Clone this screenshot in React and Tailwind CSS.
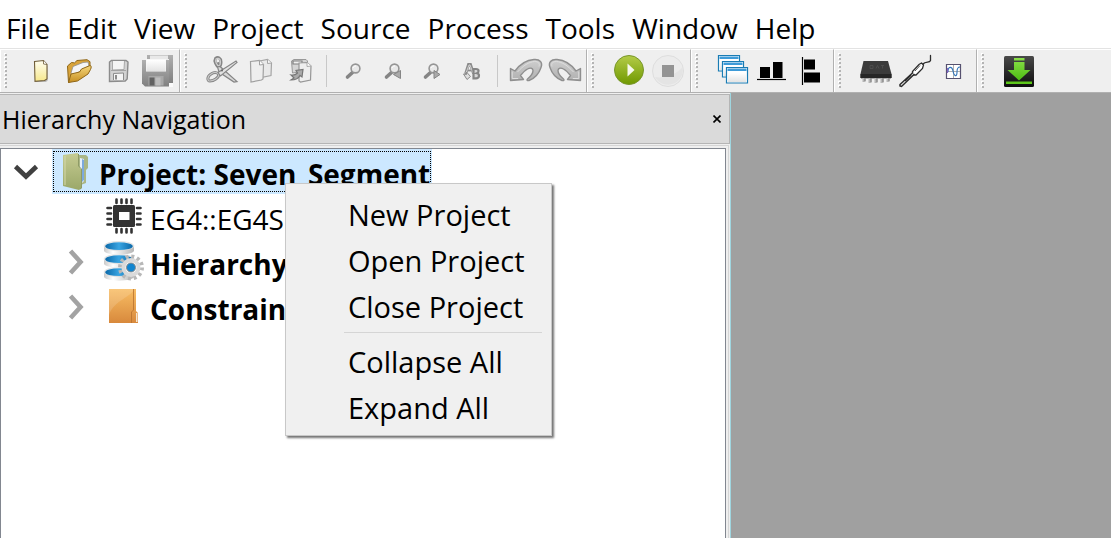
import React from "react";

const menus = ["File", "Edit", "View", "Project", "Source", "Process", "Tools", "Window", "Help"];

function Icon({ children }) {
  return (
    <svg viewBox="0 0 39 42" className="h-[42px] w-[39px]" aria-hidden="true" fill="none">
      {children}
    </svg>
  );
}

function NewIcon() {
  return (
    <Icon>
      <path d="M15 12.5l1-1h7.500l3 3.500v15l-2 1H15z" transform="translate(1 1)" fill="#b8b8b8" />
      <path d="M14.500 11.500l9-1 3.500 4v14.500l-2.500 1.500-9.500.8z" fill="url(#paper)" stroke="#705d38" strokeWidth="1.100" />
      <path d="M23.500 10.500v3.500l3.500.5" fill="#fff" stroke="#705d38" strokeWidth=".8" />
    </Icon>
  );
}

function OpenIcon() {
  return (
    <Icon>
      <path d="M8.500 16l4-3.500 3 .4 2.500-2.400 10-.8 3 2v6L9.500 32.500z" fill="#d9a43b" stroke="#8f6617" />
      <path d="M12 23l2-6.500 10-4 5-.5 1 4-17 10z" fill="#f5f5f5" stroke="#8f8f8f" strokeWidth=".8" />
      <path d="M9.500 32.500l2.500-8.500 8.500-2 2-3 8.500-3.500c1.500 0 1.500 2 .5 4l-2.500 4.500-10.500 7z" fill="url(#gold)" stroke="#8f6617" />
    </Icon>
  );
}

function SaveIcon() {
  return (
    <Icon>
      <path d="M11.500 12l2-1.500h14.500l2 1.500-.8 17-2 2-15.700.5z" fill="#d2d2d2" stroke="#8c8c8c" strokeWidth="1.400" />
      <path d="M14.500 11v9l11.500-.5.500-8.500" fill="#f4f4f4" stroke="#aaa" />
      <path d="M15.500 30v-6.500l10-.5V30" fill="#f4f4f4" stroke="#8c8c8c" />
      <path d="M18 25v4.500" stroke="#8c8c8c" strokeWidth="2" />
      <path d="M13 20.500h15" stroke="#999" strokeWidth=".8" />
    </Icon>
  );
}

function SaveAllIcon() {
  return (
    <Icon>
      <path d="M10 5h26v28h-4V9H10z" fill="url(#steel)" />
      <path d="M13 5.500h18v4H13z" fill="#e8e8e8" />
      <path d="M5 10h27v26.500H8l-3-3z" fill="url(#steel)" />
      <path d="M9 9h20v12.500H9z" fill="#f7f7f7" />
      <path d="M9.500 10h19v11h-19z" fill="url(#whiteFade)" />
      <path d="M11.500 26h15v9.500h-15z" fill="#a8a8a8" />
      <path d="M12.500 27.500h5v8h-5z" fill="#626262" />
      <path d="M18.500 27.500h5v8h-5z" fill="#bdbdbd" />
      <path d="M32 33h4v4h-4z" fill="#fafafa" />
    </Icon>
  );
}

function CutIcon() {
  return (
    <Icon>
      <path d="M16 17l-1-4.500" stroke="#858585" strokeWidth="4" />
      <path d="M13.500 8.500c2.500-2 5.500-.5 5.500 3.500 0 2.500-.5 4-2 4.500-3-.5-5-5.500-3.500-8z" stroke="#858585" strokeWidth="3" />
      <path d="M14 9c2-1.500 4.500-.5 4.500 3 0 2-.5 3.500-1.500 4-2.500-.5-4-5-3-7z" stroke="#cfcfcf" strokeWidth="1.200" />
      <path d="M17 24.500c-2-2.500-5-2.500-8-.5-4 2.500-4 7-1 7 4 0 8.500-3 9-6.500z" stroke="#858585" strokeWidth="3" />
      <path d="M17 24.500c-2-2.500-5-2.500-8-.5-4 2.500-4 7-1 7 4 0 8.500-3 9-6.500z" stroke="#c8c8c8" strokeWidth="1.200" />
      <path d="M15.500 17l2.500-.5L35 31.500l-3 .5-15-10z" fill="#d8d8d8" stroke="#858585" strokeWidth="1.200" />
      <path d="M16 22.500l18-11.500 1 1.500-16.500 13.500z" fill="#e2e2e2" stroke="#858585" strokeWidth="1.200" />
      <circle cx="20" cy="20.500" r="1" fill="#666" />
    </Icon>
  );
}

function CopyIcon() {
  return (
    <Icon>
      <path d="M18.500 11l8-1.500 4 3.500-.5 12.500-10 2z" fill="#e9e9e9" stroke="#a5a5a5" strokeWidth="1.200" />
      <path d="M26.500 9.500v4l4-.5" fill="#f8f8f8" stroke="#a5a5a5" />
      <path d="M9.500 11.500l9-1 4 4-.5 14.500-1.500 1-10.500 2z" fill="#eeeeee" stroke="#a0a0a0" strokeWidth="1.200" />
      <path d="M18.500 10.500v4.500l4-.5" fill="#fafafa" stroke="#a0a0a0" />
    </Icon>
  );
}

function PasteIcon() {
  return (
    <Icon>
      <path d="M11.500 11l2.500-1.500h12l1.500 1.500v10l-15 2z" fill="#d4d4d4" stroke="#999" />
      <path d="M13 11h9v3h-9z" fill="#efefef" stroke="#7f7f7f" strokeWidth="1.200" />
      <path d="M19 13l8-.5 4 3.500-.5 14-10 2-1.500-1z" fill="#eee" stroke="#969696" strokeWidth="1.200" />
      <path d="M27 12.500v4l4-.5" fill="#fff" stroke="#aaa" />
      <path d="M11 25c3 .5 5-.5 6.500-2l-1.500-2.500 7-1-1 7.500-2-1.500c-1.500 3-5 4.500-9 4.500l3-2z" fill="#aaa" stroke="#767676" strokeWidth="1.200" />
    </Icon>
  );
}

function Lens() {
  return (
    <>
      <path d="M18.500 22.500l-5 4.500" stroke="#858585" strokeWidth="3.600" strokeLinecap="round" />
      <circle cx="21.500" cy="18.500" r="4.400" fill="#e8e8e8" stroke="#959595" strokeWidth="1.600" />
      <path d="M19 18c.5-1.500 1.500-2 3-2" stroke="#fff" strokeWidth="1" />
    </>
  );
}

const FindIcon = () => <Icon><Lens /></Icon>;
const FindPrevIcon = () => (
  <Icon><Lens /><path d="M20.500 24.500l7-4v8z" fill="#aaa" stroke="#858585" /></Icon>
);
const FindNextIcon = () => (
  <Icon><Lens /><path d="M28 24.500l-6-4v8z" fill="#aaa" stroke="#858585" /></Icon>
);

function ReplaceIcon() {
  return (
    <Icon>
      <path d="M14.500 24l3-9.500h2l3 9" stroke="#8c8c8c" strokeWidth="2.800" />
      <path d="M15.500 20.500h5" stroke="#8c8c8c" strokeWidth="1.800" />
      <path d="M15 23l3-8h1l3 8" stroke="#d8d8d8" strokeWidth=".9" />
      <path d="M12.500 24l3 .5V22l4 4.500-3.500 3z" fill="#ddd" stroke="#8c8c8c" />
      <path d="M22.500 19h2.500c3.500 0 3 3.500 1 4.300 3 .7 2.500 5-1 5h-2.500z" fill="#d7d7d7" stroke="#858585" strokeWidth="2.200" />
      <path d="M22.500 23.500h3" stroke="#858585" />
    </Icon>
  );
}

function Arc() {
  return (
    <>
      <path d="M5.500 18.500l4.500 2.500C15 14 22 10 29 9.500c6-.5 9 3 7 8-2 6-6.500 11-12 13-2 .5-2.500-.5-1.500-1.500 3-2.500 5.500-5.500 5.500-8.500 0-2.500-3-3-5.500-1.500-2.500 1.300-5 4-7 6.500l3 4-13 1z" fill="url(#arrow)" stroke="#8f8f8f" strokeWidth="1.400" strokeLinejoin="round" />
      <path d="M7.200 21.500v7h6M12.500 22c6-6.500 11-10 17-10.500 4 0 5.500 2 4.500 5" stroke="#dedede" strokeWidth="1" />
    </>
  );
}

const UndoIcon = () => <Icon><Arc /></Icon>;
const RedoIcon = () => <Icon><g transform="translate(42 0) scale(-1 1)"><Arc /></g></Icon>;

const RunIcon = () => (
  <Icon>
    <circle cx="20" cy="20" r="14.500" fill="url(#green)" stroke="#78962b" />
    <path d="M18.500 13.500l7 6.500-7 6.500z" fill="#f6f8ec" />
  </Icon>
);

const StopIcon = () => (
  <Icon>
    <circle cx="20" cy="21" r="15.500" fill="#ececec" stroke="#dedede" />
    <path d="M7 27c10 2 22-3 27.500-10A14.800 14.800 0 0 1 7 27z" fill="#e4e4e4" />
    <path d="M14 15h12v12H14z" fill="#949494" />
  </Icon>
);

function MiniWindow({ x, y }) {
  return (
    <g transform={`translate(${x} ${y})`}>
      <path d="M.5.5h21v15.500H.5z" fill="#fff" stroke="#1a7cb4" strokeWidth="1.200" />
      <path d="M1.500 1.500h19v2.500h-19z" fill="#3e9bd8" />
      <path d="M2 6h18v9H2z" fill="url(#whiteFade)" />
    </g>
  );
}

const CascadeIcon = () => (
  <Icon>
    <MiniWindow x="5" y="5" />
    <MiniWindow x="9" y="11" />
    <MiniWindow x="13" y="17" />
  </Icon>
);

const AlignBottomIcon = () => (
  <Icon>
    <path d="M8 17h10v11H8zM21 12h9.500v16H21z" fill="#000" />
    <path d="M5 29.500h29" stroke="#000" strokeWidth="1.200" />
  </Icon>
);

const AlignLeftIcon = () => (
  <Icon>
    <path d="M13 9.500h11v10H13zM13 22.500h16v10H13z" fill="#000" />
    <path d="M11.500 7v28" stroke="#000" strokeWidth="1.200" />
  </Icon>
);

const ChipIcon = () => (
  <Icon>
    <path d="M5 28h30v1H5z" fill="#aaa" />
    <path d="M8 28v4M14 28v5M20 28v5M26 28v5M32 28v4" stroke="#b6b6b6" strokeWidth="3" />
    <path d="M9 28v3M15 28v4M21 28v4M27 28v4M33 28v3" stroke="#777" strokeWidth="1" />
    <path d="M7.500 11h24.500l3.500 13v4h-31v-4z" fill="#3b3b3b" />
    <path d="M4.500 24h31v4h-31z" fill="#262626" />
    <path d="M14 15.500v3h3v-3zM20 18.500l1.500-3 1.500 3M25 15.500h3M26.500 15.500v3" stroke="#505050" strokeWidth=".8" />
  </Icon>
);

const ProbeIcon = () => (
  <Icon>
    <path d="M35.500 5.500v5c-1 3-5 0-7.500 3.500" stroke="#2c2c2c" strokeWidth="1.300" strokeLinecap="round" />
    <path d="M26.500 13l2 2-1 3.500-6.500 6.500-3.500 0 0-3.500 6.500-7z" fill="#fff" stroke="#2c2c2c" strokeWidth="1.300" />
    <path d="M20 21l5-5.500" stroke="#2c2c2c" strokeWidth=".8" />
    <path d="M18 22.500L5 34.500v1.500l1.500.5L19.500 24" fill="#eee" stroke="#2c2c2c" strokeWidth="1.500" />
    <path d="M16 25l-6 6" stroke="#2c2c2c" strokeWidth="1.600" />
  </Icon>
);

const WaveIcon = () => (
  <Icon>
    <path d="M12.500 14.500h14v14h-14z" fill="#fff" stroke="#56516f" strokeWidth="1.200" />
    <path d="M13 21.500h13M19.500 15v13" stroke="#999" strokeWidth=".8" />
    <path d="M14 22c0-6 4-6 5-1s4 7 4 1c0-4 1-5 3-5" stroke="#3274b8" strokeWidth="1.100" />
    <path d="M13.500 23v-5" stroke="#8060c0" strokeWidth="1.200" />
  </Icon>
);

const DownloadIcon = () => (
  <Icon>
    <rect x="5" y="6" width="30" height="31" rx="1.500" fill="url(#dark)" />
    <path d="M15 8h10.500v2.500H15zM15 12h10.500v8h6L20 30.500 8.500 20H15z" fill="url(#lime)" />
    <path d="M7 31.500h26v2.500H7z" fill="#5cc619" />
  </Icon>
);

const groups = [
  { name: "File", handle: "w-5", items: [["New", NewIcon], ["Open", OpenIcon], ["Save", SaveIcon], ["Save all", SaveAllIcon]] },
  {
    name: "Edit",
    items: [["Cut", CutIcon], ["Copy", CopyIcon], ["Paste", PasteIcon], null, ["Find", FindIcon], ["Find previous", FindPrevIcon], ["Find next", FindNextIcon], ["Replace", ReplaceIcon], null, ["Undo", UndoIcon], ["Redo", RedoIcon]],
  },
  { name: "Run", items: [["Run", RunIcon], ["Stop", StopIcon]] },
  { name: "Arrange", items: [["Cascade windows", CascadeIcon], ["Align bottom", AlignBottomIcon], ["Align left", AlignLeftIcon]] },
  { name: "Device", items: [["Chip view", ChipIcon], ["Probe", ProbeIcon], ["Waveform", WaveIcon]] },
  { name: "Download", last: true, items: [["Download", DownloadIcon]] },
];

function Gradients() {
  const defs = [
    ["paper", "#fffef0", "#f7e88c"],
    ["gold", "#f5d77c", "#c78f22"],
    ["steel", "#b0b0b0", "#808080"],
    ["whiteFade", "#ffffff", "#e3e3e3"],
    ["arrow", "#cfcfcf", "#b0b0b0"],
    ["green", "#b4cc48", "#6f9800"],
    ["dark", "#4a4a4a", "#0c0c0c"],
    ["lime", "#8be04a", "#4dbb12"],
    ["orange", "#f8bd64", "#d8893c"],
    ["olive", "#c5cb92", "#9ba869"],
  ];
  return (
    <svg className="absolute h-0 w-0" aria-hidden="true">
      <defs>
        {defs.map(([id, a, b]) => (
          <linearGradient key={id} id={id} x1="0" y1="0" x2="0" y2="1">
            <stop stopColor={a} />
            <stop offset="1" stopColor={b} />
          </linearGradient>
        ))}
        <linearGradient id="cylinder">
          <stop stopColor="#c9c9c9" />
          <stop offset=".3" stopColor="#fff" />
          <stop offset="1" stopColor="#b5b5b5" />
        </linearGradient>
        <linearGradient id="water">
          <stop stopColor="#0b68a8" />
          <stop offset=".5" stopColor="#3aa5e2" />
          <stop offset="1" stopColor="#0b68a8" />
        </linearGradient>
      </defs>
    </svg>
  );
}

function Toolbar() {
  return (
    <div className="flex h-[45px] shrink-0 overflow-hidden border-t border-b border-t-[#e3e3e3] border-b-[#b0b0b0] bg-[#efefef]">
      {groups.map((g) => (
        <div
          key={g.name}
          role="toolbar"
          aria-label={g.name}
          className={`flex shrink-0 items-center border-t border-t-white ${g.last ? "grow" : "border-r border-r-[#b0b0b0] pr-[3px]"}`}
        >
          <div className={`flex h-full shrink-0 items-center border-l border-l-white pl-[3px] ${g.handle || "w-[22px]"}`}>
            <svg viewBox="0 0 4 36" className="h-9 w-1" aria-hidden="true">
              {[0, 4, 8, 12, 16, 20, 24, 28, 32].map((y) => (
                <g key={y}>
                  <path d={`M1 ${y + 1}h2v2h-2z`} fill="#b4b4b4" />
                  <path d={`M0 ${y}h2v1h-1v1h-1z`} fill="#fff" />
                </g>
              ))}
            </svg>
          </div>
          {g.items.map((item, i) => {
            if (!item) return <div key={i} className="mr-[7px] ml-[7px] h-8 w-px bg-[#c8c8c8]" />;
            const [label, Glyph] = item;
            return (
              <button key={i} type="button" aria-label={label} className="shrink-0 hover:bg-[#dcebf8]">
                <Glyph />
              </button>
            );
          })}
        </div>
      ))}
    </div>
  );
}

const ProjectIcon = () => (
  <svg viewBox="0 0 36 40" className="h-10 w-9" aria-hidden="true" fill="none">
    <path d="M22 3h8l2 2v11l-2 2v13l-8 3z" fill="#aab686" />
    <path d="M24 6l4 1v22l-4 4z" fill="#e7f0fb" />
    <path d="M26 7l2 1v20l-2 2z" fill="#7da9dd" />
    <path d="M7 3l15-2 1 14 3 3v18l-3 2L7 34z" fill="url(#olive)" />
    <path d="M22.500 2v12l3 3v19l-1.500 1" stroke="#8e9b66" />
    <path d="M9 4v29" stroke="#d5d9ac" />
  </svg>
);

const CpuIcon = () => (
  <svg viewBox="0 0 36 36" className="size-9" aria-hidden="true" fill="none">
    <path d="M10.500 1.500v3.500M15.500 1.500v3.500M20.500 1.500v3.500M25.500 1.500v3.500M10.500 31v3.500M15.500 31v3.500M20.500 31v3.500M25.500 31v3.500M1.500 10h3.500M1.500 15.500h3.500M1.500 21h3.500M1.500 26.500h3.500M31 10h3.500M31 15.500h3.500M31 21h3.500M31 26.500h3.500" stroke="#333" strokeWidth="2.600" strokeLinecap="round" />
    <rect x="7" y="7" width="22" height="22" rx="1.500" fill="#333" />
    <path d="M13 14h10.500v8H13z" fill="#fff" />
  </svg>
);

const DatabaseIcon = () => (
  <svg viewBox="0 0 42 40" className="h-10 w-[42px]" aria-hidden="true" fill="none">
    {[26, 13, 0].map((y) => (
      <g key={y} transform={`translate(0 ${y})`}>
        <path d="M1 5v4.500c0 5.500 30 5.500 30 0V5z" fill="url(#cylinder)" />
        <ellipse cx="16" cy="5" rx="15" ry="4.600" fill="#f1f1f1" stroke="#cfcfcf" strokeWidth=".5" />
        <ellipse cx="16" cy="5.200" rx="13.800" ry="3.900" fill="url(#water)" />
      </g>
    ))}
    <circle cx="28" cy="26.500" r="11" stroke="#b8b8b8" strokeWidth="4" strokeDasharray="2.900 2.860" />
    <circle cx="28" cy="26.500" r="7.500" fill="#fff" stroke="#dadada" strokeWidth="4" />
    <circle cx="28" cy="26.500" r="4.500" fill="#1285cf" stroke="#8b8b8b" />
  </svg>
);

const FolderIcon = () => (
  <svg viewBox="0 0 32 36" className="h-9 w-8" aria-hidden="true" fill="none">
    <path d="M1 1h27v22l2 2v10H1z" fill="url(#orange)" />
    <path d="M1 1h25C24 9 6 12 1 27z" fill="#fff" fillOpacity=".15" />
    <path d="M25.500 1v21l-2 2v11" stroke="#b8712f" strokeWidth=".8" />
    <path d="M28 25h1.500v9H28z" fill="#f4e4d0" />
  </svg>
);

function Chevron({ open }) {
  return open ? (
    <svg viewBox="0 0 26 16" className="h-4 w-[26px]" aria-hidden="true" fill="none">
      <path d="M2.500 2.500L13 12.500 23.500 2.500" stroke="#404040" strokeWidth="4.600" />
    </svg>
  ) : (
    <svg viewBox="0 0 16 26" className="h-[26px] w-4" aria-hidden="true" fill="none">
      <path d="M2.500 2L12.500 13 2.500 24" stroke="#a3a3a3" strokeWidth="4.600" />
    </svg>
  );
}

function TreeRow({ toggle, icon, children, bold }) {
  return (
    <li role="treeitem" className="flex h-[45px] items-center pl-[67px]">
      <span className="flex w-[35px] shrink-0">
        {toggle && <button type="button" aria-label={`Expand ${children}`}><Chevron /></button>}
      </span>
      <span className="flex w-[47px] shrink-0 items-center pb-[2px]">{icon}</span>
      <span className={`pt-1 text-[28px] leading-9 whitespace-nowrap ${bold ? "font-bold" : ""}`}>{children}</span>
    </li>
  );
}

function ContextMenu() {
  const item = (label) => (
    <button key={label} type="button" role="menuitem" className="flex h-[46px] w-full items-center pl-[53px] text-[29px] whitespace-nowrap hover:bg-[#90c8f6]">
      {label}
    </button>
  );
  return (
    <div role="menu" className="absolute top-[34px] left-[284px] w-[267px] border border-[#c8c8c8] bg-[#f0f0f0] px-[9px] pt-2 pb-1 shadow-[2px_2px_2px_rgba(0,0,0,0.55)]">
      {["New Project", "Open Project", "Close Project"].map(item)}
      <div className="h-[9px] pt-[2px] pl-[49px]"><div className="border-t border-[#d5d5d5]" /></div>
      {["Collapse All", "Expand All"].map(item)}
    </div>
  );
}

export default function App() {
  return (
    <div className="flex h-screen flex-col overflow-hidden bg-white font-['Open_Sans','Noto_Sans',sans-serif] text-black">
      <Gradients />
      <nav className="flex h-12 shrink-0 items-center gap-[17px] pt-2 pl-[6px] text-[28px]">
        {menus.map((m) => (
          <button key={m} type="button" className="leading-10">{m}</button>
        ))}
      </nav>
      <Toolbar />
      <div className="flex min-h-0 grow bg-[#a0a0a0]">
        <aside className="flex w-[731px] shrink-0 flex-col border-r border-[#9fd6e0] bg-[#efefef] pt-px">
          <header className="flex h-[50px] shrink-0 items-center justify-between border border-l-0 border-[#b5b5b5] bg-[#dadada] pr-2 pl-[2px]">
            <h1 className="pt-[2px] text-[25px]">Hierarchy Navigation</h1>
            <button type="button" aria-label="Close panel">
              <svg viewBox="0 0 8 8" className="size-2" aria-hidden="true"><path d="M.5.5l7 7M7.500.5l-7 7" stroke="#000" strokeWidth="1.600" /></svg>
            </button>
          </header>
          <div className="mt-px mr-px min-h-0 grow border-t border-r border-[#d5d5d5] pt-[2px] pr-[2px]">
            <div className="relative h-full border-t border-r border-l border-[#828790] bg-white">
              <ul role="tree" aria-label="Project hierarchy">
                <li role="treeitem" aria-expanded="true" aria-selected="true" className="flex h-[45px] items-center pl-3">
                  <button type="button" aria-label="Collapse project" className="mr-[13px]"><Chevron open /></button>
                  <span className="flex h-full items-center bg-[#cce8ff] p-px">
                    <span className="flex h-[41px] items-center border border-dotted border-black pl-[2px]">
                      <ProjectIcon />
                      <span className="ml-[7px] pt-1 text-[28px] leading-9 font-bold whitespace-nowrap">Project: Seven_Segment</span>
                    </span>
                  </span>
                </li>
                <TreeRow icon={<span className="pl-[3px]"><CpuIcon /></span>}>EG4::EG4S</TreeRow>
                <TreeRow bold toggle icon={<DatabaseIcon />}>Hierarchy</TreeRow>
                <TreeRow bold toggle icon={<span className="pl-[5px]"><FolderIcon /></span>}>Constrain</TreeRow>
              </ul>
              <ContextMenu />
            </div>
          </div>
        </aside>
        <main className="grow" />
      </div>
    </div>
  );
}
